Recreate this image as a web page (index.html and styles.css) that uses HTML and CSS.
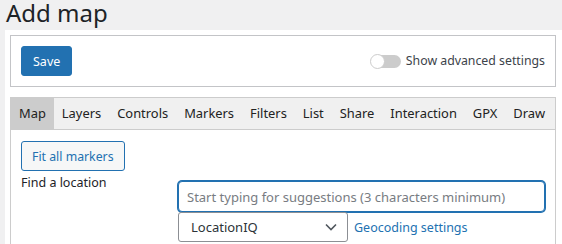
FILE: index.html
```html
<!DOCTYPE html>
<html>
<head>
    <title>Add map</title>
    <meta name="viewport" content="width=device-width, initial-scale=1.0">
    <link rel="stylesheet" href="styles.css">
</head>
<body>
<h1 class="page-title">Add map</h1>
<div class="wrap">
    <div class="top-box">
        <button class="btn-primary">Save</button>
        <label class="toggle">
            <span class="toggle-track"><span class="toggle-knob"></span></span>
            <span class="toggle-label">Show advanced settings</span>
        </label>
    </div>

    <div class="tabs">
        <div class="tab-bar">
            <span class="tab active">Map</span>
            <span class="tab">Layers</span>
            <span class="tab">Controls</span>
            <span class="tab">Markers</span>
            <span class="tab">Filters</span>
            <span class="tab">List</span>
            <span class="tab">Share</span>
            <span class="tab">Interaction</span>
            <span class="tab">GPX</span>
            <span class="tab">Draw</span>
        </div>
        <div class="tab-content">
            <button class="btn-secondary">Fit all markers</button>
            <div class="field-row">
                <div class="field-label">Find a location</div>
                <div class="field-input">
                    <input type="text" class="search-input" placeholder="Start typing for suggestions (3 characters minimum)">
                    <div class="geo-row">
                        <div class="select">
                            <span>LocationIQ</span>
                            <svg width="12" height="8" viewBox="0 0 12 8"><path d="M1 1.5 L6 6.5 L11 1.5" fill="none" stroke="#50575e" stroke-width="1.6"/></svg>
                        </div>
                        <a href="#" class="link">Geocoding settings</a>
                    </div>
                </div>
            </div>
        </div>
    </div>
</div>
</body>
</html>
```

FILE: styles.css
```css
html, body {
    height: 100%;
}
body {
    margin: 0;
    background: #f0f0f1;
    font-family: "Noto Sans", "Open Sans", sans-serif;
    font-size: 12.5px;
    color: #3c434a;
    overflow: hidden;
}
.page-title {
    margin: 0;
    padding: 0 6px 5px 6px;
    font-size: 24px;
    font-weight: 400;
    line-height: 25px;
    color: #1d2327;
}
.wrap {
    box-sizing: border-box;
    background: #fff;
    margin-left: 5px;
    padding: 5px 0 0 5px;
    height: calc(100% - 30px);
    overflow: hidden;
}
.top-box {
    border: 1px solid #c3c4c7;
    padding: 10px;
    display: flex;
    align-items: center;
    justify-content: space-between;
    width: 524px;
}
.btn-primary {
    background: #2271b1;
    color: #fff;
    border: 1px solid #2271b1;
    border-radius: 3px;
    height: 30px;
    padding: 0 11px;
    font-family: inherit;
    font-size: 12.5px;
}
.toggle {
    display: flex;
    align-items: center;
    gap: 5px;
}
.toggle-track {
    width: 30px;
    height: 13px;
    background: #ccc;
    border-radius: 7px;
    position: relative;
}
.toggle-knob {
    position: absolute;
    left: -1px;
    top: -1px;
    width: 13px;
    height: 13px;
    border-radius: 50%;
    background: #fff;
    border: 1px solid #ccc;
}
.toggle-label {
    font-size: 12.3px;
    line-height: 20px;
}
.tabs {
    margin-top: 10px;
    border: 1px solid #ccc;
    border-bottom: none;
    width: 544px;
}
.tab-bar {
    display: flex;
    background: #f0f0f0;
    border-bottom: 1px solid #ccc;
}
.tab {
    padding: 0 8px;
    line-height: 31px;
    font-size: 12.9px;
    color: #222;
}
.tab.active {
    background: #ccc;
}
.tab-content {
    padding: 11px 10px 0 10px;
    height: 120px;
}
.btn-secondary {
    background: #f6f7f7;
    color: #2271b1;
    border: 1px solid #2271b1;
    border-radius: 3px;
    height: 30px;
    padding: 0 10px;
    font-family: inherit;
    font-size: 12.3px;
}
.field-row {
    display: flex;
    margin-top: 2px;
}
.field-label {
    width: 158px;
    line-height: 20px;
    color: #1d2327;
}
.field-input {
    padding-top: 8px;
}
.search-input {
    display: block;
    box-sizing: border-box;
    width: 367px;
    height: 31px;
    border: 1px solid #2271b1;
    box-shadow: 0 0 0 1px #2271b1;
    border-radius: 4px;
    padding: 0 8px;
    font-family: inherit;
    font-size: 13px;
    color: #2c3338;
    outline: none;
}
.search-input::placeholder {
    color: #787c82;
}
.geo-row {
    display: flex;
    align-items: center;
    gap: 6px;
}
.select {
    box-sizing: border-box;
    width: 170px;
    height: 30px;
    border: 1px solid #8c8f94;
    border-radius: 3px;
    display: flex;
    align-items: center;
    justify-content: space-between;
    padding: 0 10px 0 12px;
    font-size: 13px;
    color: #2c3338;
}
.link {
    color: #2271b1;
    text-decoration: none;
    font-size: 12.5px;
}
```
